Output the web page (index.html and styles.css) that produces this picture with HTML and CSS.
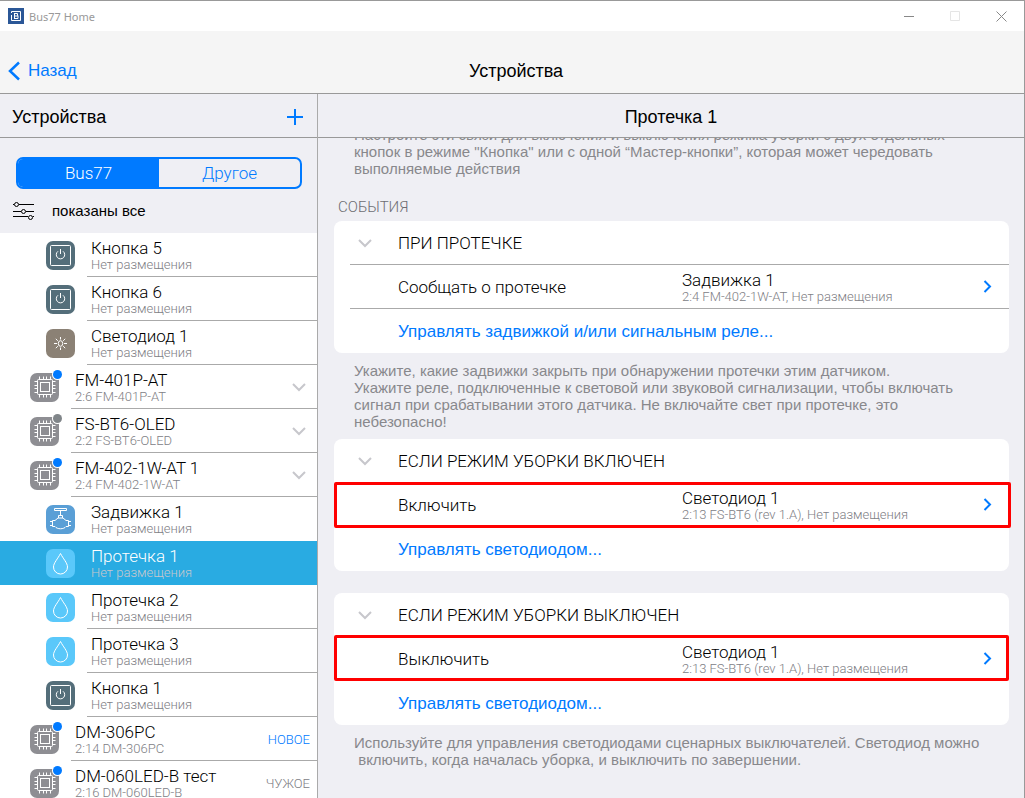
FILE: index.html
```html
<!DOCTYPE html>
<html lang="ru">
<head>
    <meta charset="UTF-8">
    <meta name="viewport" content="width=device-width, initial-scale=1">
    <title>Bus77 Home</title>
    <link rel="stylesheet" href="styles.css">
</head>
<body>
    <svg class="sprite" aria-hidden="true">
        <symbol id="i-power" viewBox="0 0 29 29">
            <rect x="4.5" y="4.5" width="20" height="20" rx="1"/>
            <path d="M12 10.3a4.2 4.2 0 1 0 5 0M14.5 8v5"/>
        </symbol>
        <symbol id="i-led" viewBox="0 0 29 29">
            <ellipse cx="14.5" cy="14.5" rx="2.2" ry="2.8"/>
            <path d="M14.5 8v2.5M14.5 18.5V21M8 14.5h3M18 14.5h3M9.8 9.8l2 2M17.2 17.2l2 2M19.2 9.8l-2 2M11.8 17.2l-2 2"/>
        </symbol>
        <symbol id="i-chip" viewBox="0 0 29 29">
            <rect x="7.5" y="6.5" width="15" height="15" rx="1"/>
            <rect x="10.5" y="9.5" width="9" height="9"/>
            <path d="M9.5 3.5v3M13.5 3.5v3M16.5 3.5v3M20.5 3.5v3M9.5 21.5v3M13.5 21.5v3M16.5 21.5v3M20.5 21.5v3M4.5 8.5h3M4.5 12.5h3M4.5 15.5h3M4.5 19.5h3M22.5 8.5h3M22.5 12.5h3M22.5 15.5h3M22.5 19.5h3"/>
        </symbol>
        <symbol id="i-valve" viewBox="0 0 29 29">
            <path d="M8.5 3.5h12v2h-12zM14.5 5.5v5M12.500 13v-2.500h4V13M6.500 15.500H9l3-2.500h5l3 2.500h2.500v6H20c-2 3-9 3-11 0H6.500zM4 16.500h2.500M4 20.500h2.500M22.500 16.500H25M22.500 20.500H25"/>
        </symbol>
        <symbol id="i-drop" viewBox="0 0 29 29">
            <path d="M14.5 4.500c2.500 5 7 9.500 7 13.500a7 7 0 0 1-14 0c0-4 4.500-8.500 7-13.500z"/>
        </symbol>
        <symbol id="i-down" viewBox="0 0 14 9">
            <path d="M1 1l6 6 6-6"/>
        </symbol>
        <symbol id="i-right" viewBox="0 0 9 14">
            <path d="M1.500 1L7 6.500 1.500 12"/>
        </symbol>
    </svg>

    <div class="titlebar">
        <svg class="logo" viewBox="0 0 16 16">
            <rect width="16" height="16" fill="#2b5797"/>
            <path d="M3.500 5V3.500h9v9h-9V7M6 5.500h3.500v2H10v3H6M6.500 5.500v5M6.500 8H10" fill="none" stroke="#fff"/>
        </svg>
        <span class="app-name">Bus77 Home</span>
        <button class="win-btn" aria-label="Свернуть"><svg width="11" height="11" viewBox="0 0 11 11"><path d="M0 5.500h10"/></svg></button>
        <button class="win-btn" aria-label="Развернуть" disabled><svg width="11" height="11" viewBox="0 0 11 11"><path d="M.5.5h9v9h-9z"/></svg></button>
        <button class="win-btn" aria-label="Закрыть"><svg width="11" height="11" viewBox="0 0 11 11"><path d="M.5.5l10 10M10.500.5l-10 10"/></svg></button>
    </div>

    <header class="navbar">
        <a class="back" href="#"><svg width="12" height="20" viewBox="0 0 12 20"><path d="M11 1.500L2 10l9 8.500"/></svg>Назад</a>
        <h1>Устройства</h1>
    </header>

    <div class="main">
        <aside class="sidebar">
            <div class="subhead">
                <h2>Устройства</h2>
                <button class="add" aria-label="Добавить"><svg width="16" height="16" viewBox="0 0 16 16"><path d="M8 0v16M0 8h16"/></svg></button>
            </div>
            <div class="filter">
                <div class="segments">
                    <button class="active">Bus77</button>
                    <button>Другое</button>
                </div>
                <button class="shown">
                    <svg width="22" height="20" viewBox="0 0 22 20"><path d="M0 3.500h1M6 3.500h15M0 10.500h8M13 10.500h8M0 15.500h15M20 15.500h1"/><circle cx="3.500" cy="3.500" r="2"/><circle cx="10.500" cy="10.500" r="2"/><circle cx="17.500" cy="16.500" r="2"/></svg>
                    показаны все
                </button>
            </div>
            <ul class="devices">
                <li><a class="device child" href="#"><svg class="icon power"><use href="#i-power"/></svg><span class="info"><b>Кнопка 5</b><small>Нет размещения</small></span></a></li>
                <li><a class="device child" href="#"><svg class="icon power"><use href="#i-power"/></svg><span class="info"><b>Кнопка 6</b><small>Нет размещения</small></span></a></li>
                <li><a class="device child" href="#"><svg class="icon led"><use href="#i-led"/></svg><span class="info"><b>Светодиод 1</b><small>Нет размещения</small></span></a></li>
                <li><a class="device" href="#"><span class="module"><svg class="icon chip"><use href="#i-chip"/></svg><i class="dot"></i></span><span class="info"><b>FM-401P-AT</b><small>2:6 FM-401P-AT</small></span><svg class="down"><use href="#i-down"/></svg></a></li>
                <li><a class="device" href="#"><span class="module"><svg class="icon chip"><use href="#i-chip"/></svg><i class="dot offline"></i></span><span class="info"><b>FS-BT6-OLED</b><small>2:2 FS-BT6-OLED</small></span><svg class="down"><use href="#i-down"/></svg></a></li>
                <li><a class="device" href="#"><span class="module"><svg class="icon chip"><use href="#i-chip"/></svg><i class="dot"></i></span><span class="info"><b>FM-402-1W-AT 1</b><small>2:4 FM-402-1W-AT</small></span><svg class="down"><use href="#i-down"/></svg></a></li>
                <li><a class="device child last" href="#"><svg class="icon valve"><use href="#i-valve"/></svg><span class="info"><b>Задвижка 1</b><small>Нет размещения</small></span></a></li>
                <li><a class="device child selected" href="#"><svg class="icon drop"><use href="#i-drop"/></svg><span class="info"><b>Протечка 1</b><small>Нет размещения</small></span></a></li>
                <li><a class="device child" href="#"><svg class="icon drop"><use href="#i-drop"/></svg><span class="info"><b>Протечка 2</b><small>Нет размещения</small></span></a></li>
                <li><a class="device child" href="#"><svg class="icon drop"><use href="#i-drop"/></svg><span class="info"><b>Протечка 3</b><small>Нет размещения</small></span></a></li>
                <li><a class="device child" href="#"><svg class="icon power"><use href="#i-power"/></svg><span class="info"><b>Кнопка 1</b><small>Нет размещения</small></span></a></li>
                <li><a class="device" href="#"><span class="module"><svg class="icon chip"><use href="#i-chip"/></svg><i class="dot"></i></span><span class="info"><b>DM-306PC</b><small>2:14 DM-306PC</small></span><span class="state new">НОВОЕ</span></a></li>
                <li><a class="device" href="#"><span class="module"><svg class="icon chip"><use href="#i-chip"/></svg><i class="dot"></i></span><span class="info"><b>DM-060LED-B тест</b><small>2:16 DM-060LED-B</small></span><span class="state">ЧУЖОЕ</span></a></li>
            </ul>
        </aside>

        <section class="detail">
            <div class="subhead center"><h2>Протечка 1</h2></div>
            <div class="scroll">
                <p class="note first">Настройте эти связи для включения и выключения режима уборки с двух отдельных<br>кнопок в режиме "Кнопка" или с одной “Мастер-кнопки”, которая может чередовать<br>выполняемые действия</p>
                <h3>СОБЫТИЯ</h3>

                <div class="card">
                    <button class="row head"><svg class="down"><use href="#i-down"/></svg><span>ПРИ ПРОТЕЧКЕ</span></button>
                    <a class="row line" href="#"><span class="label">Сообщать о протечке</span><span class="info"><b>Задвижка 1</b><small>2:4 FM-402-1W-AT, Нет размещения</small></span><svg class="right"><use href="#i-right"/></svg></a>
                    <a class="row line link" href="#"><span class="label">Управлять задвижкой и/или сигнальным реле...</span></a>
                </div>
                <p class="note">Укажите, какие задвижки закрыть при обнаружении протечки этим датчиком.<br>Укажите реле, подключенные к световой или звуковой сигнализации, чтобы включать<br>сигнал при срабатывании этого датчика. Не включайте свет при протечке, это<br>небезопасно!</p>

                <div class="card">
                    <button class="row head"><svg class="down"><use href="#i-down"/></svg><span>ЕСЛИ РЕЖИМ УБОРКИ ВКЛЮЧЕН</span></button>
                    <a class="row marked wide" href="#"><span class="label">Включить</span><span class="info"><b>Светодиод 1</b><small>2:13 FS-BT6 (rev 1.A), Нет размещения</small></span><svg class="right"><use href="#i-right"/></svg></a>
                    <a class="row link" href="#"><span class="label">Управлять светодиодом...</span></a>
                </div>

                <div class="card spaced">
                    <button class="row head"><svg class="down"><use href="#i-down"/></svg><span>ЕСЛИ РЕЖИМ УБОРКИ ВЫКЛЮЧЕН</span></button>
                    <a class="row marked" href="#"><span class="label">Выключить</span><span class="info"><b>Светодиод 1</b><small>2:13 FS-BT6 (rev 1.A), Нет размещения</small></span><svg class="right"><use href="#i-right"/></svg></a>
                    <a class="row link" href="#"><span class="label">Управлять светодиодом...</span></a>
                </div>
                <p class="note">Используйте для управления светодиодами сценарных выключателей. Светодиод можно<br>&nbsp;включить, когда началась уборка, и выключить по завершении.</p>
            </div>
        </section>
    </div>
</body>
</html>
```
FILE: styles.css
```css
*{
    margin: 0;
    padding: 0;
    box-sizing: border-box;
}
ul{
    list-style: none;
}
a{
    color: inherit;
    text-decoration: none;
}
button{
    border: 0;
    background: none;
    font: inherit;
    color: inherit;
    cursor: pointer;
}
svg{
    display: block;
    flex: none;
    fill: none;
}
body{
    height: 100vh;
    display: flex;
    flex-direction: column;
    overflow: hidden;
    border-top: 1px solid #999;
    border-right: 1px solid #999;
    background: #efeff4;
    color: #000;
    font-family: "Liberation Sans", Arial, sans-serif;
    font-size: 17px;
}
.sprite{
    position: absolute;
    width: 0;
    height: 0;
}

/* window title */
.titlebar{
    display: flex;
    align-items: center;
    height: 30px;
    padding-left: 8px;
    background: #fff;
}
.logo{
    width: 16px;
    height: 16px;
}
.app-name{
    flex: 1;
    padding-left: 5px;
    font-family: "Noto Sans", sans-serif;
    font-size: 11px;
    color: #999;
}
.win-btn{
    width: 46px;
    height: 30px;
    display: flex;
    align-items: center;
    justify-content: center;
}
.win-btn svg{
    stroke: #888;
}
.win-btn:disabled svg{
    stroke: #e5e5e5;
}

/* navigation bar */
.navbar{
    display: grid;
    grid-template-columns: 1fr auto 1fr;
    align-items: center;
    height: 63px;
    padding: 18px 0 0 8px;
    background: #f5f5f5;
    border-bottom: 1px solid #999;
}
.navbar h1,
.subhead h2{
    font-size: 18px;
    font-weight: normal;
    line-height: 20px;
}
.back{
    display: flex;
    align-items: center;
    gap: 8px;
    color: #007aff;
}
.back svg{
    stroke: #007aff;
    stroke-width: 2.5;
}

.main{
    flex: 1;
    display: flex;
    min-height: 0;
}
.sidebar{
    width: 318px;
    flex: none;
    border-right: 1px solid #aaa;
    overflow: hidden;
}
.detail{
    flex: 1;
    min-width: 0;
    display: flex;
    flex-direction: column;
}
.subhead{
    display: flex;
    align-items: center;
    justify-content: space-between;
    flex: none;
    height: 44px;
    padding: 2px 14px 0 12px;
    border-bottom: 1px solid #999;
}
.subhead.center{
    justify-content: center;
    padding: 2px 0 0;
}
.add svg{
    stroke: #007aff;
    stroke-width: 2;
}

/* filter */
.filter{
    padding: 19px 15px 0 16px;
    height: 95px;
}
.segments{
    display: flex;
    height: 32px;
    border: 2px solid #007aff;
    border-radius: 7px;
    overflow: hidden;
}
.segments button{
    flex: 1;
    font-family: Roboto, sans-serif;
    font-weight: 300;
    font-size: 17px;
    color: #007aff;
}
.segments .active{
    background: #007aff;
    color: #fff;
}
.shown{
    display: flex;
    align-items: center;
    gap: 17px;
    height: 43px;
    margin-left: -3px;
    font-size: 15px;
}
.shown svg{
    stroke: #000;
}

/* device list */
.devices{
    background: #fff;
}
.device{
    display: flex;
    align-items: center;
    height: 44px;
    padding-left: 30px;
    position: relative;
}
.device.child{
    padding-left: 46px;
}
.device .info{
    flex: 1;
    height: 44px;
    margin-left: 12px;
    padding: 6px 0 0 4px;
    border-bottom: 1px solid #aaa;
}
.info b,
.info small{
    display: block;
    font-family: Roboto, sans-serif;
    font-weight: 300;
    white-space: nowrap;
}
.info b{
    font-size: 17px;
    line-height: 18px;
}
.info small{
    font-size: 13px;
    line-height: 15px;
    color: #808085;
}
.device.last .info,
.device.selected .info{
    border-color: transparent;
}
.device.selected{
    background: #29abe2;
    color: #fff;
}
.device.selected small{
    color: #c7c7cc;
}
.module{
    position: relative;
}
.icon{
    width: 29px;
    height: 29px;
    border-radius: 7px;
    stroke: #fff;
}
.power{
    background: #546e7a;
}
.led{
    background: #8b8175;
}
.chip{
    background: #8e8e93;
}
.valve{
    background: #5a9fd6;
}
.drop{
    background: #5ac8fa;
}
.dot{
    position: absolute;
    top: -3px;
    right: -3px;
    width: 9px;
    height: 9px;
    border-radius: 50%;
    background: #007aff;
    box-shadow: 0 0 0 1px #fff;
}
.dot.offline{
    background: #808589;
}
.down{
    width: 14px;
    height: 9px;
    stroke: #c7c7cc;
    stroke-width: 2;
}
.device .down,
.state{
    position: absolute;
    right: 11px;
}
.state{
    right: 7px;
    font-family: Roboto, sans-serif;
    font-weight: 300;
    font-size: 13px;
    color: #808085;
}
.state.new{
    color: #007aff;
}

/* events */
.scroll{
    flex: 1;
    overflow: hidden;
    padding: 0 15px 0 16px;
}
.note{
    padding: 9px 0 9px 20px;
    font-size: 15px;
    line-height: 17px;
    color: #88888c;
    white-space: nowrap;
}
.note.first{
    margin-top: -21px;
}
.scroll h3{
    padding: 12px 0 4px 4px;
    font-size: 15px;
    font-weight: 300;
    font-family: Roboto, sans-serif;
    line-height: 19px;
    color: #6d6d72;
}
.card{
    background: #fff;
    border-radius: 8px;
}
.card.spaced{
    margin-top: 22px;
}
.row{
    display: grid;
    grid-template-columns: 48px 284px 1fr auto;
    align-items: center;
    width: 100%;
    height: 44px;
    padding: 0 17px 0 16px;
    text-align: left;
    position: relative;
    font-family: Roboto, sans-serif;
    font-weight: 300;
}
.row .label{
    grid-column: 2;
}
.row.head .down{
    margin-left: 8px;
}
.row.head span{
    grid-column: 2 / 5;
}
.row.line::before{
    content: "";
    position: absolute;
    top: -1px;
    left: 16px;
    right: 0;
    border-top: 1px solid #aaa;
}
.row.link{
    padding-top: 2px;
}
.row.link .label{
    grid-column: 2 / 5;
    font-family: "Liberation Sans", Arial, sans-serif;
    font-weight: normal;
    color: #007aff;
}
.right{
    width: 9px;
    height: 14px;
    stroke: #007aff;
    stroke-width: 2;
}
.row.marked::after{
    content: "";
    position: absolute;
    inset: -2px 0 0;
    border: 3px solid #f00;
    border-radius: 2px;
}
.row.marked.wide::after{
    inset: -1px -2px -1px 0;
}
```
